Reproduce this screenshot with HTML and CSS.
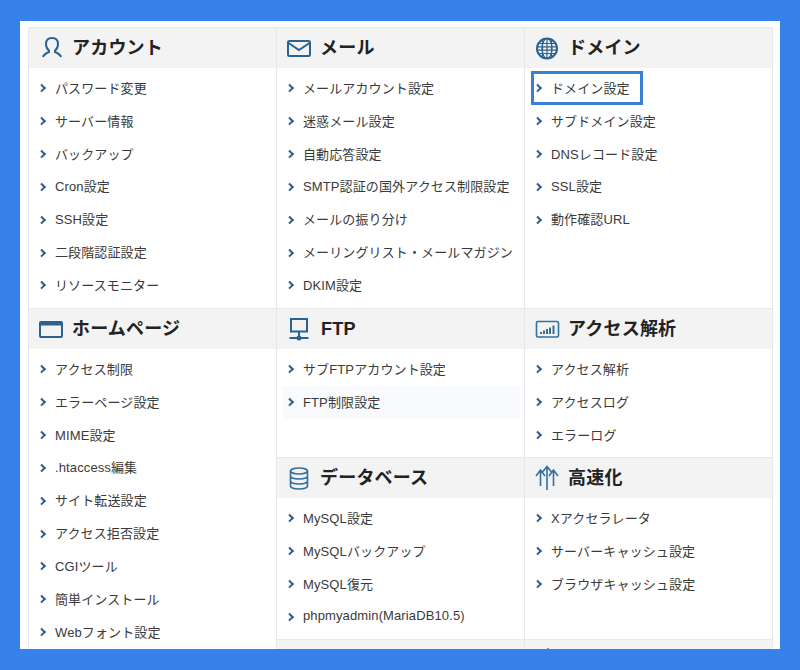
FILE: index.html
```html
<!DOCTYPE html>
<html lang="ja">
  <head>
    <meta charset="UTF-8" />
    <title>サーバーパネル</title>
    <link rel="stylesheet" href="styles.css">
  </head>
  <body>
    <div class="panel">
      <div class="grid">
        <section class="cell">
          <h2 class="head">
            <svg class="icon" viewBox="0 0 26 26"><path d="M5 22c.5-2.500 2.500-3.500 6-5v-1.500C9 14 8 11.500 8 9c0-3.800 2.400-6 6-6s6 2.200 6 6c0 2.500-1 5-3 6.500V17c3.500 1.500 5.500 2.500 6 5"/></svg>
            <span class="title">アカウント</span>
          </h2>
          <ul class="list">
            <li><a>パスワード変更</a></li>
            <li><a>サーバー情報</a></li>
            <li><a>バックアップ</a></li>
            <li><a>Cron設定</a></li>
            <li><a>SSH設定</a></li>
            <li><a>二段階認証設定</a></li>
            <li><a>リソースモニター</a></li>
          </ul>
        </section>
        <section class="cell">
          <h2 class="head">
            <svg class="icon" viewBox="0 0 26 26"><rect x="2" y="6" width="22" height="15" rx="1.500"/><path d="M2.500 8 13 15l10.500-7"/></svg>
            <span class="title">メール</span>
          </h2>
          <ul class="list">
            <li><a>メールアカウント設定</a></li>
            <li><a>迷惑メール設定</a></li>
            <li><a>自動応答設定</a></li>
            <li><a>SMTP認証の国外アクセス制限設定</a></li>
            <li><a>メールの振り分け</a></li>
            <li><a>メーリングリスト・メールマガジン</a></li>
            <li><a>DKIM設定</a></li>
          </ul>
        </section>
        <section class="cell">
          <h2 class="head">
            <svg class="icon icon-thin" viewBox="0 0 26 26"><circle cx="13" cy="13.500" r="10" stroke-width="2"/><ellipse cx="13" cy="13.500" rx="5" ry="10"/><path d="M13 3.500v20M4.500 8.500h17M3.500 11.800h19M3.500 15.200h19M4.500 18.500h17M8.500 4.500v18M17.500 4.500v18"/></svg>
            <span class="title">ドメイン</span>
          </h2>
          <ul class="list">
            <li class="picked"><a>ドメイン設定</a></li>
            <li><a>サブドメイン設定</a></li>
            <li><a>DNSレコード設定</a></li>
            <li><a>SSL設定</a></li>
            <li><a>動作確認URL</a></li>
          </ul>
        </section>

        <section class="cell cell-tall">
          <h2 class="head">
            <svg class="icon" viewBox="0 0 26 26"><rect x="2" y="6" width="22" height="15" rx="1"/><path d="M2 8h22" stroke-width="3"/></svg>
            <span class="title">ホームページ</span>
          </h2>
          <ul class="list">
            <li><a>アクセス制限</a></li>
            <li><a>エラーページ設定</a></li>
            <li><a>MIME設定</a></li>
            <li><a>.htaccess編集</a></li>
            <li><a>サイト転送設定</a></li>
            <li><a>アクセス拒否設定</a></li>
            <li><a>CGIツール</a></li>
            <li><a>簡単インストール</a></li>
            <li><a>Webフォント設定</a></li>
          </ul>
        </section>
        <section class="cell">
          <h2 class="head">
            <svg class="icon" viewBox="0 0 26 26"><path d="M5 3h16v12.500H5zM13 15.500V22M3.500 22h19"/><circle cx="13" cy="22" r="1.500"/></svg>
            <span class="title title-en">FTP</span>
          </h2>
          <ul class="list">
            <li><a>サブFTPアカウント設定</a></li>
            <li class="hover"><a>FTP制限設定</a></li>
          </ul>
        </section>
        <section class="cell">
          <h2 class="head">
            <svg class="icon icon-chart" viewBox="0 0 26 26"><rect x="2.500" y="5.500" width="22" height="15.500" rx="1.500"/><path d="M7 18v-2M10 18v-3.500M13 18v-5M16 18v-6.500M19.500 18V9.500" stroke-width="2"/></svg>
            <span class="title">アクセス解析</span>
          </h2>
          <ul class="list">
            <li><a>アクセス解析</a></li>
            <li><a>アクセスログ</a></li>
            <li><a>エラーログ</a></li>
          </ul>
        </section>

        <section class="cell">
          <h2 class="head">
            <svg class="icon icon-chart" viewBox="0 0 26 26"><ellipse cx="13" cy="6" rx="8.500" ry="3"/><path d="M4.500 6v15c0 1.700 3.800 3 8.500 3s8.500-1.300 8.500-3V6M4.500 11c0 1.700 3.800 3 8.500 3s8.500-1.300 8.500-3M4.500 16c0 1.700 3.800 3 8.500 3s8.500-1.300 8.500-3"/></svg>
            <span class="title">データベース</span>
          </h2>
          <ul class="list">
            <li><a>MySQL設定</a></li>
            <li><a>MySQLバックアップ</a></li>
            <li><a>MySQL復元</a></li>
            <li><a>phpmyadmin(MariaDB10.5)</a></li>
          </ul>
        </section>
        <section class="cell">
          <h2 class="head">
            <svg class="icon icon-chart" viewBox="0 0 26 26"><path d="M13 25V2M8.500 7 13 1.500 17.500 7M6.500 21V6M2 11l4.500-6 4.500 6M19.500 21V6M15 11l4.500-6 4.500 6"/></svg>
            <span class="title">高速化</span>
          </h2>
          <ul class="list">
            <li><a>Xアクセラレータ</a></li>
            <li><a>サーバーキャッシュ設定</a></li>
            <li><a>ブラウザキャッシュ設定</a></li>
          </ul>
        </section>

        <section class="cell"><div class="head"></div></section>
        <section class="cell">
          <div class="head"><span class="peak"></span></div>
        </section>
      </div>
    </div>
  </body>
</html>
```

FILE: styles.css
```css
html,
body {
  margin: 0;
  padding: 0;
}
body {
  width: 800px;
  height: 670px;
  box-sizing: border-box;
  padding: 21px 20px;
  background-color: #3681ea;
  overflow: hidden;
  font-family: "Liberation Sans", "Noto Sans CJK JP", sans-serif;
  color: #3a3a3a;
}
.panel {
  height: 628px;
  box-sizing: border-box;
  padding: 6px 7px 0 8px;
  background-color: white;
  overflow: hidden;
}
.grid {
  display: grid;
  grid-template-columns: 248px 248px 248px;
  grid-template-rows: 281px 149px 182px 60px;
  border-left: 1px solid #e8e8e8;
}
.cell {
  border-right: 1px solid #e8e8e8;
  border-top: 1px solid #e8e8e8;
  min-width: 0;
}
.cell-tall {
  grid-row: 2 / span 3;
}
.head {
  display: flex;
  align-items: center;
  gap: 8px;
  height: 40px;
  margin: 0;
  padding-left: 9px;
  background-color: #f3f3f3;
  font-size: 18px;
  font-weight: bold;
  letter-spacing: 0.2px;
  color: #222;
  position: relative;
}
.title {
  padding-bottom: 5px;
}
.title-en {
  padding-bottom: 0;
  margin-left: 1px;
}
.icon {
  width: 26px;
  height: 26px;
  flex: none;
  fill: none;
  stroke: #2a6291;
  stroke-width: 2;
}
.icon-thin {
  stroke-width: 1.200;
}
.icon-chart {
  stroke-width: 1.600;
  stroke: #32709f;
}
.list {
  list-style: none;
  margin: 0;
  padding: 4px 3px 0 3px;
}
.list li {
  height: 32.83px;
  box-sizing: border-box;
}
.list a {
  display: flex;
  align-items: center;
  height: 100%;
  box-sizing: border-box;
  padding: 0 0 2px 23px;
  position: relative;
  font-size: 13px;
  letter-spacing: 0.12px;
  white-space: nowrap;
}
.list a::before {
  content: "";
  position: absolute;
  left: 7px;
  top: 50%;
  width: 3.500px;
  height: 3.500px;
  margin-top: -3px;
  border-top: 2.200px solid #2a5f92;
  border-right: 2.200px solid #2a5f92;
  transform: rotate(45deg);
}
.hover {
  margin: 0 1px 0 3px;
  background-color: #f8fafd;
}
.hover a {
  margin-left: -3px;
}
.picked {
  position: relative;
}
.picked::after {
  content: "";
  position: absolute;
  left: 3px;
  top: -1px;
  width: 106px;
  height: 28px;
  border: 3px solid #3a7fd6;
}
.peak {
  position: absolute;
  left: 19px;
  top: 8px;
  width: 0;
  height: 0;
  border-left: 4px solid transparent;
  border-right: 4px solid transparent;
  border-bottom: 3px solid #2a5f92;
}
```
